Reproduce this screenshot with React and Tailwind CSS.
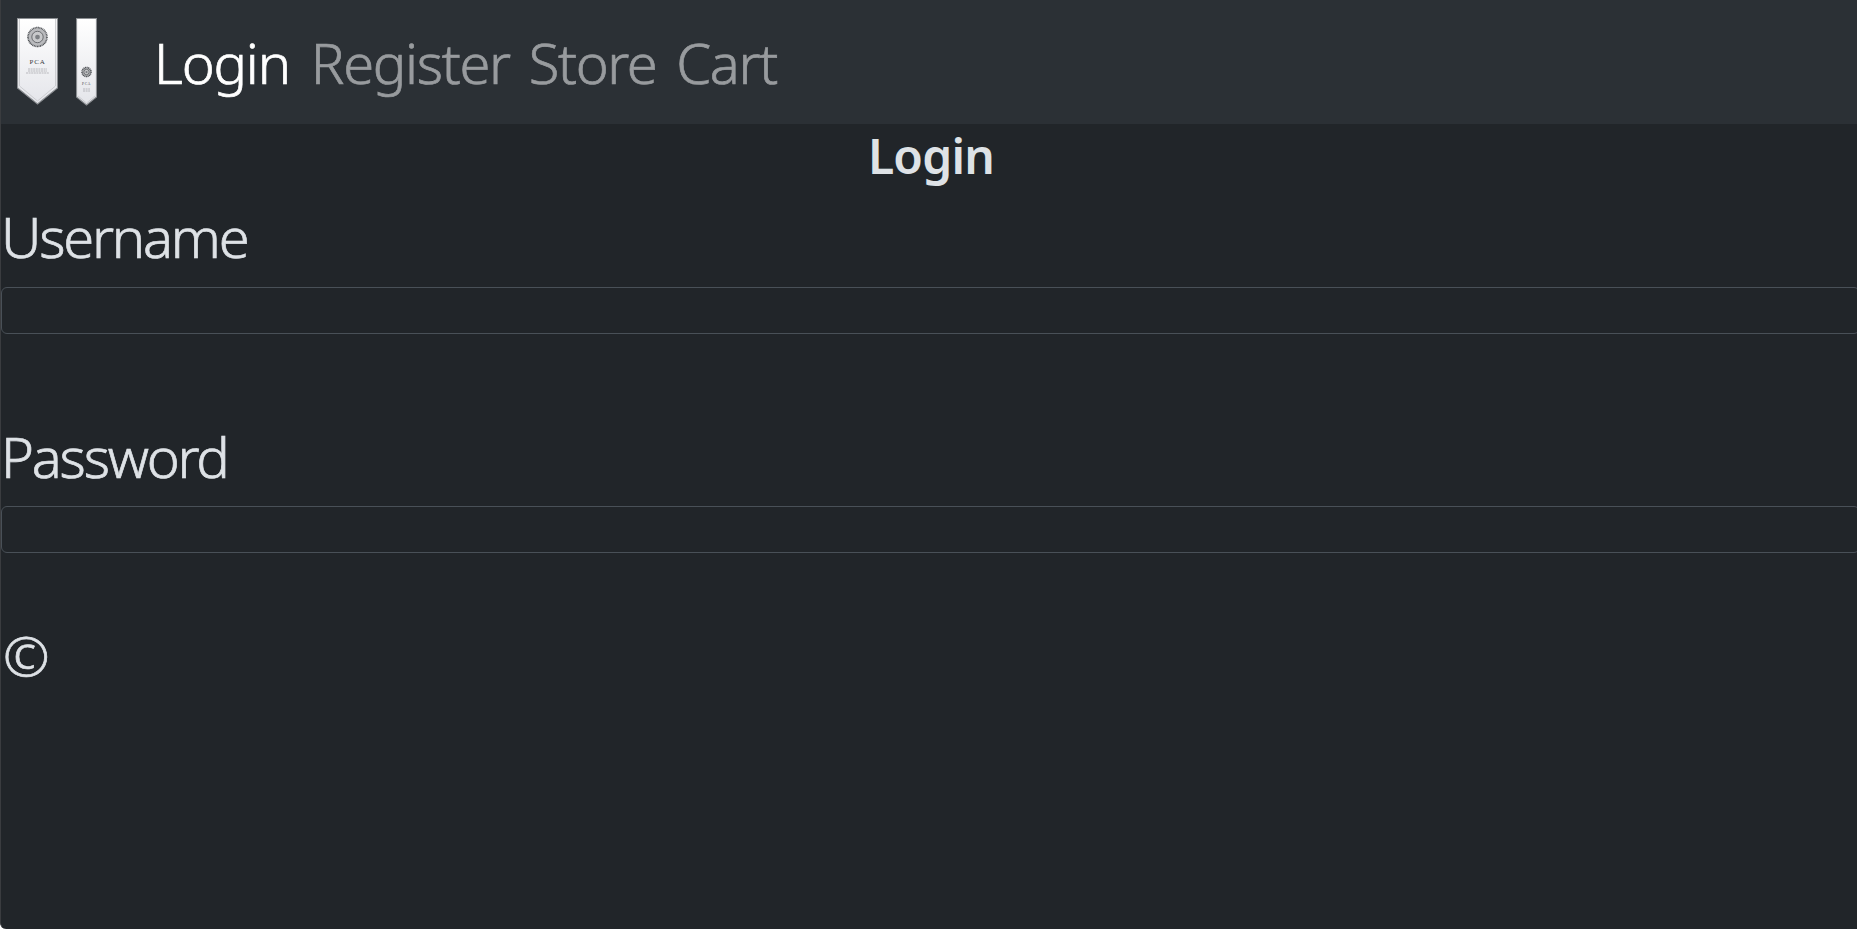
function Banner({ w, pts, inner, seal, sealR, pcaY, pcaSize, lines }) {
  return (
    <svg width={w} height="90" viewBox={`0 0 ${w} 90`} className="block shrink-0">
      <defs>
        <linearGradient id={`g${w}`} x1="0" y1="0" x2="0" y2="1">
          <stop offset="0" stopColor="#ffffff" />
          <stop offset="1" stopColor="#e4e5ea" />
        </linearGradient>
      </defs>
      <polygon points={pts} fill={`url(#g${w})`} stroke="#8b8e92" strokeWidth="1.2" />
      <polyline points={inner} fill="none" stroke="#c4c5c9" strokeWidth="0.8" />
      <circle cx={w / 2} cy={seal} r={sealR} fill="#b9babd" stroke="#4c4f53" strokeWidth="1.6" strokeDasharray="1 0.6" />
      <circle cx={w / 2} cy={seal} r={sealR * 0.6} fill="#c8c9cb" stroke="#55585c" strokeWidth="0.8" />
      <circle cx={w / 2} cy={seal} r={sealR * 0.25} fill="#7d8084" />
      <text x={w / 2} y={pcaY} textAnchor="middle" fontSize={pcaSize} fill="#3a3c40" fontFamily="Liberation Serif, serif" letterSpacing="0.8">PCA</text>
      {lines.map((l, i) => (
        <line key={i} x1={l[0]} x2={l[1]} y1={l[2]} y2={l[2]} stroke="#a0a2a6" strokeWidth="0.7" strokeDasharray="2 0.6" />
      ))}
    </svg>
  );
}

export default function App() {
  return (
    <div className="w-full h-[929px] overflow-hidden bg-[#212529] text-[#dee2e6] border-l border-[#3a3c3f] rounded-bl-[6px] font-['Noto_Sans','Open_Sans',sans-serif]">
      <nav className="h-[124px] bg-[#2b3035] flex items-center">
        <div className="flex items-start pl-[16px] gap-[18px] w-[153px] shrink-0 self-start mt-[18px]">
          <Banner w={41} pts="0.5,0.5 40.5,0.5 40.5,70 20.5,86 0.5,70" inner="2.5,1 2.5,68 20.5,83 38.5,68 38.5,1" seal={19} sealR={9.5} pcaY={46} pcaSize={7} lines={[[11, 30, 51], [11, 30, 53], [9, 32, 55]]} />
          <Banner w={21} pts="0.5,0.5 20.5,0.5 20.5,79 10.5,87 0.5,79" inner="2,78 10.5,85 19,78" seal={54} sealR={4.5} pcaY={67} pcaSize={3.5} lines={[[7, 14, 71], [7, 14, 73]]} />
        </div>
        <div className="flex items-center text-[56px] leading-[84px] font-light [-webkit-text-stroke:0.7px]">
          <a className="text-white tracking-[-1.2px] mr-[21px]">Login</a>
          <a className="text-[#989b9e] tracking-[-1.3px] mr-[19px]">Register</a>
          <a className="text-[#989b9e] tracking-[-1.4px] mr-[20px]">Store</a>
          <a className="text-[#989b9e] tracking-[-1.4px]">Cart</a>
        </div>
      </nav>
      <h1 className="text-center text-[48px] leading-[58px] font-semibold tracking-[-0.8px] h-[70px] pt-[3px] pl-[4px]">Login</h1>
      <form className="flex flex-col">
        <label className="text-[56px] leading-[84px] font-light [-webkit-text-stroke:0.7px] tracking-[-2.2px] mb-[9px]">Username</label>
        <input className="block w-[calc(100%+3px)] h-[47px] border border-[#495057] rounded-[6px] bg-[#212529] outline-none" />
        <label className="text-[56px] leading-[84px] font-light [-webkit-text-stroke:0.7px] tracking-[-2.2px] mt-[80px] mb-[8px]">Password</label>
        <input className="block w-[calc(100%+3px)] h-[47px] border border-[#495057] rounded-[6px] bg-[#212529] outline-none" />
      </form>
      <footer className="text-[56px] leading-[84px] font-light [-webkit-text-stroke:0.7px] mt-[60px] pl-[2px]">©</footer>
    </div>
  );
}
